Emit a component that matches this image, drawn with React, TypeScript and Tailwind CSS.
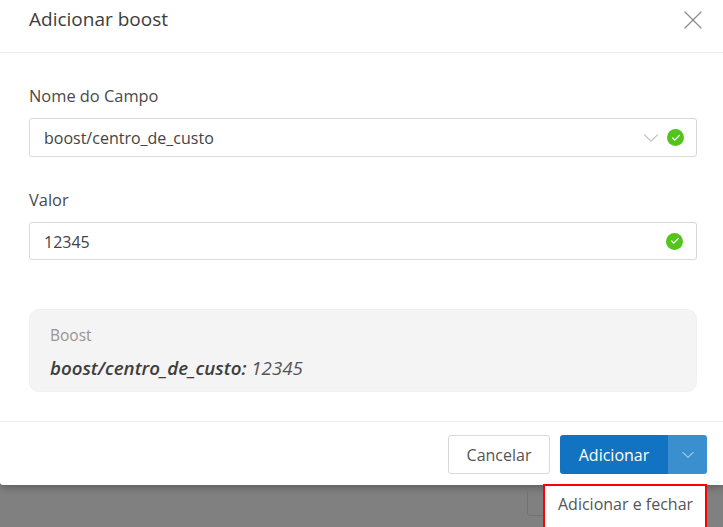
import { Check, ChevronDown, X } from 'lucide-react'

function ValidIcon() {
  return (
    <span className="flex h-[17px] w-[17px] items-center justify-center rounded-full bg-[#52c41a]">
      <Check className="h-[10px] w-[10px] text-white" strokeWidth={3} />
    </span>
  )
}

export default function App() {
  return (
    <div className="relative flex h-[527px] w-[723px] flex-col overflow-hidden bg-[#808080] font-['Open_Sans',sans-serif] text-[#444444]">
      {/* Modal */}
      <div className="flex h-[485px] w-full flex-col rounded-bl-[3px] bg-white shadow-[0_2px_8px_rgba(0,0,0,0.3)]">
        <div className="flex h-[53px] items-center justify-between border-b border-[#f0f0f0] pb-[13px] pl-[29px] pr-[14px]">
          <h1 className="text-[19px] font-medium text-[#3d3d3d]">Adicionar boost</h1>
          <X className="h-[32px] w-[32px] text-[#8c8c8c]" strokeWidth={0.9} />
        </div>

        <div className="flex flex-col px-[29px] pr-[26px]">
          <label className="mt-[32px] text-[16.4px] leading-[22px] text-[#4a4a4a]">Nome do Campo</label>
          <div className="mt-[11px] flex h-[39px] items-center justify-between rounded-[3px] border border-[#d9d9d9] pl-[14px] pr-[12px]">
            <span className="text-[16px]">boost/centro_de_custo</span>
            <div className="flex items-center gap-[6px]">
              <ChevronDown className="h-[26px] w-[26px] text-[#c4c4c4] -mr-[3px]" strokeWidth={1} />
              <ValidIcon />
            </div>
          </div>

          <label className="mt-[32px] text-[16.4px] leading-[22px] text-[#4a4a4a]">Valor</label>
          <div className="mt-[11px] flex h-[38px] items-center justify-between rounded-[3px] border border-[#d9d9d9] pl-[14px] pr-[13px]">
            <span className="pt-[1px] text-[16px]">12345</span>
            <ValidIcon />
          </div>

          <div className="mt-[49px] flex h-[83px] flex-col rounded-[10px] border border-[#f0f0f0] bg-[#f4f4f4] px-[20px] pt-[14px]">
            <span className="text-[15.5px] leading-[22px] text-[#9a9390]">Boost</span>
            <p className="mt-[10px] text-[18.7px] italic leading-[24px] text-[#555555]">
              <b className="font-semibold text-[#3d3d3d]">boost/centro_de_custo:</b> 12345
            </p>
          </div>
        </div>

        <div className="mt-[29px] flex flex-1 items-start justify-end gap-[10px] border-t border-[#f0f0f0] pr-[16px] pt-[13px]">
          <button className="h-[39px] w-[102px] rounded-[3px] border border-[#d9d9d9] bg-white text-[16px] text-[#555555]">
            Cancelar
          </button>
          <div className="flex h-[39px] overflow-hidden rounded-[3px] text-white">
            <button className="w-[108px] bg-[#1173c1] text-[16px] font-medium">Adicionar</button>
            <button className="flex w-[39px] items-center justify-center bg-[#3a90ce]">
              <ChevronDown className="h-[20px] w-[20px]" strokeWidth={1} />
            </button>
          </div>
        </div>
      </div>

      {/* Button behind the overlay */}
      <div className="absolute left-[527px] top-[488px] h-[28px] w-[30px] rounded-[3px] border border-[#737373]" />

      {/* Dropdown item, highlighted */}
      <div className="absolute left-[543px] top-[484px] h-[43px] w-[164px] border-2 border-b-0 border-[#ff0000] bg-white pl-[13px] pt-[6px] text-[16px] leading-[24px] text-[#555555] whitespace-nowrap">
        Adicionar e fechar
      </div>
    </div>
  )
}
